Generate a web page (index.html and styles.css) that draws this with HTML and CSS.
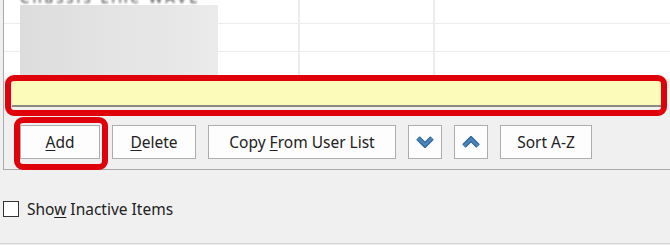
FILE: index.html
```html
<!DOCTYPE html>
<html lang="en">
<head>
  <meta charset="UTF-8">
  <title>Items</title>
  <link rel="stylesheet" href="styles.css">
</head>
<body>
  <div class="panel">
    <div class="grid">
      <div class="row first"><span class="cell-text">Chassis Line WAVE</span></div>
      <div class="row"></div>
      <div class="row"></div>
    </div>
    <div class="new-item"></div>
    <div class="toolbar">
      <button class="btn btn-add"><u>A</u>dd</button>
      <button class="btn btn-delete"><u>D</u>elete</button>
      <button class="btn btn-copy">Copy <u>F</u>rom User List</button>
      <button class="btn btn-arrow" title="Move down">
        <svg width="18" height="12" viewBox="0 0 18 12"><polyline points="2,2 9,9 16,2" fill="none" stroke="#2d6393" stroke-width="5" stroke-linejoin="miter"/><polyline points="2,2 9,9 16,2" fill="none" stroke="#4a86bb" stroke-width="2.6"/></svg>
      </button>
      <button class="btn btn-arrow" title="Move up">
        <svg width="18" height="12" viewBox="0 0 18 12"><polyline points="2,10 9,3 16,10" fill="none" stroke="#2d6393" stroke-width="5" stroke-linejoin="miter"/><polyline points="2,10 9,3 16,10" fill="none" stroke="#4a86bb" stroke-width="2.6"/></svg>
      </button>
      <button class="btn btn-sort">Sort A-Z</button>
    </div>
    <div class="redacted"></div>
    <div class="mark mark-row"></div>
    <div class="mark mark-add"></div>
  </div>

  <label class="check">
    <span class="box"></span>
    <span>Sho<u>w</u> Inactive Items</span>
  </label>
  <div class="footer-line"></div>
</body>
</html>
```

FILE: styles.css
```css
body {
  margin: 0;
  background: #f0f0f0;
  font-family: "Noto Sans", "Open Sans", sans-serif;
  color: #222;
  width: 670px;
  height: 245px;
  overflow: hidden;
}

.panel {
  position: relative;
  margin-left: 3px;
  border-left: 1px solid #a9a9a9;
  border-bottom: 1px solid #a9a9a9;
  height: 169px;
}

.grid {
  background: #fff;
  height: 80px;
  background-image:
    linear-gradient(to right, transparent 294px, #ececec 294px, #ececec 296px, transparent 296px,
      transparent 429px, #ececec 429px, #ececec 431px, transparent 431px);
}

.row {
  height: 27px;
  border-bottom: 1px solid #ececec;
}

.row.first {
  height: 23px;
  overflow: hidden;
}

.cell-text {
  display: block;
  margin: -13px 0 0 16px;
  font-size: 15px;
  color: #444;
  filter: blur(1px);
  letter-spacing: 3px;
}

.new-item {
  height: 25px;
  margin: 0 4px 0 8px;
  background: #fdfbb9;
  border-bottom: 2px solid #8a8a80;
}

.toolbar {
  display: flex;
  gap: 12px;
  padding: 18px 0 0 16px;
}

.btn {
  height: 34px;
  padding: 0;
  background: #fdfdfd;
  border: 1px solid #adadad;
  border-radius: 0;
  font-family: inherit;
  font-size: 15.5px;
  color: #222;
}

.btn u {
  text-underline-offset: 2px;
}

.btn-add { width: 80px; }
.btn-delete { width: 84px; }
.btn-copy { width: 188px; }
.btn-arrow {
  width: 34px;
  display: flex;
  align-items: center;
  justify-content: center;
}
.btn-sort { width: 92px; }

.redacted {
  position: absolute;
  left: 16px;
  top: 5px;
  width: 198px;
  height: 70px;
  background: linear-gradient(to right, #dcdcdc, #e3e3e3 40%, #e6e6e6 70%, #ebebeb);
}

.mark {
  position: absolute;
  border: 6px solid #e0020b;
  border-radius: 9px;
}

.mark-row {
  left: 1px;
  top: 75px;
  width: 650px;
  height: 29px;
}

.mark-add {
  left: 10px;
  top: 117px;
  width: 82px;
  height: 41px;
}

.check {
  display: flex;
  align-items: center;
  gap: 8px;
  margin: 28px 0 0 3px;
  font-size: 15.5px;
  color: #222;
}

.check u {
  text-underline-offset: 2px;
}

.box {
  width: 14px;
  height: 14px;
  border: 1px solid #333;
  background: #fff;
}

.footer-line {
  position: absolute;
  left: 0;
  top: 243px;
  width: 670px;
  border-top: 1px solid #d4d4d4;
}
```
